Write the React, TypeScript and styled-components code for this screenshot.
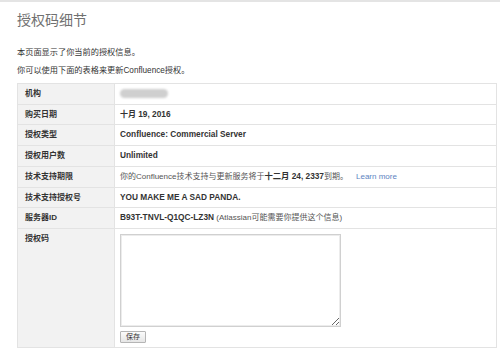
import * as React from 'react'
import styled, { createGlobalStyle } from 'styled-components'

const GlobalStyle = createGlobalStyle`
  html, body {
    margin: 0;
    padding: 0;
    background: #fff;
  }
  body {
    border-top: 2px solid #e4e4e4;
    font-family: "Liberation Sans", "Noto Sans CJK SC", sans-serif;
    color: #333;
  }
`

const Page = styled.div`
  padding: 10px 3px 0 17px;
`

const Title = styled.h1`
  margin: 0;
  font-size: 14px;
  line-height: 16px;
  font-weight: normal;
  color: #707070;
`

const Intro = styled.p`
  margin: 0;
  font-size: 8.2px;
  line-height: 18px;
  color: #333;

  &:first-of-type {
    margin-top: 16px;
  }
`

const InfoTable = styled.table`
  margin-top: 3px;
  width: 100%;
  border-collapse: collapse;
  border: 1px solid #e3e3e3;
`

const Row = styled.tr`
  border-bottom: 1px solid #e3e3e3;
`

const Label = styled.th`
  width: 83px;
  padding: 4px 6px 4px 7px;
  background: #f2f2f2;
  border-right: 1px solid #e3e3e3;
  text-align: left;
  vertical-align: top;
  font-size: 8px;
  line-height: 11.7px;
  font-weight: bold;
  color: #333;
`

const Value = styled.td<{ $bold?: boolean }>`
  padding: 4px 5px;
  vertical-align: top;
  font-size: 8px;
  line-height: 11.7px;
  font-weight: ${p => (p.$bold ? 'bold' : 'normal')};
  color: #333;

  b {
    font-size: 8.3px;
  }
`

const Strong = styled.b`
  font-weight: bold;
  color: #333;
`

const Muted = styled.span`
  color: #555;
`

const LearnMore = styled.a`
  margin-left: 8px;
  color: #5d84c2;
  text-decoration: none;
`

const Blurred = styled.div`
  width: 48px;
  height: 9px;
  margin: 1px 0 0 0;
  border-radius: 5px;
  background: #cfcfcf;
  filter: blur(1.2px);
`

const CodeArea = styled.textarea`
  display: block;
  box-sizing: border-box;
  width: 221px;
  height: 93px;
  margin: 1px 0 4px;
  border: 1px solid #d0d0d0;
  box-shadow: inset 0 0 0 1px #ececec;
  padding: 2px;
  font-size: 8px;
`

const SaveButton = styled.button`
  display: block;
  width: 26px;
  height: 12px;
  padding: 0;
  border: 1px solid #b5b5b5;
  border-radius: 1px;
  background: linear-gradient(#fbfbfb, #e6e6e6);
  font-family: "Liberation Sans", "Noto Sans CJK SC", sans-serif;
  font-size: 7px;
  line-height: 10px;
  color: #333;
`

export default function App() {
  return (
    <Page>
      <GlobalStyle />
      <Title>授权码细节</Title>
      <Intro>本页面显示了你当前的授权信息。</Intro>
      <Intro>你可以使用下面的表格来更新Confluence授权。</Intro>
      <InfoTable>
        <tbody>
          <Row>
            <Label>机构</Label>
            <Value><Blurred /></Value>
          </Row>
          <Row>
            <Label>购买日期</Label>
            <Value $bold>十月 <b>19, 2016</b></Value>
          </Row>
          <Row>
            <Label>授权类型</Label>
            <Value $bold><b>Confluence: Commercial Server</b></Value>
          </Row>
          <Row>
            <Label>授权用户数</Label>
            <Value $bold><b>Unlimited</b></Value>
          </Row>
          <Row>
            <Label>技术支持期限</Label>
            <Value>
              <Muted>你的Confluence技术支持与更新服务将于</Muted>
              <Strong>十二月 24, 2337</Strong>
              <Muted>到期。</Muted>
              <LearnMore href="#">Learn more</LearnMore>
            </Value>
          </Row>
          <Row>
            <Label>技术支持授权号</Label>
            <Value $bold><b>YOU MAKE ME A SAD PANDA.</b></Value>
          </Row>
          <Row>
            <Label>服务器ID</Label>
            <Value>
              <Strong>B93T-TNVL-Q1QC-LZ3N</Strong> <Muted>(Atlassian可能需要你提供这个信息)</Muted>
            </Value>
          </Row>
          <Row>
            <Label>授权码</Label>
            <Value>
              <CodeArea />
              <SaveButton>保存</SaveButton>
            </Value>
          </Row>
        </tbody>
      </InfoTable>
    </Page>
  )
}
